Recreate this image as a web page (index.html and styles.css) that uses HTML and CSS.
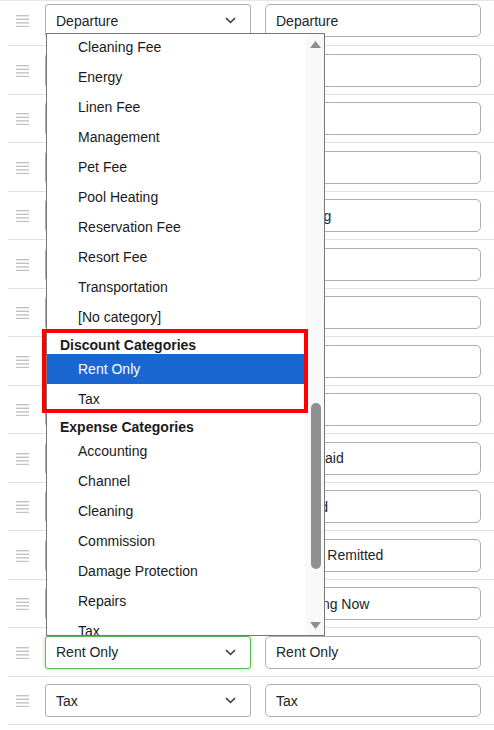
FILE: index.html
```html
<!DOCTYPE html>
<html>
<head>
<meta charset="utf-8">
<link rel="stylesheet" href="styles.css">
</head>
<body>
<div class="topline"></div>
<div class="rows">
  <div class="row">
    <span class="handle"><svg width="13" height="12" viewBox="0 0 13 12"><rect y="0" width="13" height="1.4"/><rect y="3.6" width="13" height="1.4"/><rect y="7.2" width="13" height="1.4"/><rect y="10.8" width="13" height="1.4"/></svg></span>
    <div class="select"><span>Departure</span><svg class="chev" width="11" height="7" viewBox="0 0 11 7"><polyline points="1,1 5.5,5.5 10,1"/></svg></div>
    <div class="input">Departure</div>
  </div>
  <div class="row">
    <span class="handle"><svg width="13" height="12" viewBox="0 0 13 12"><rect y="0" width="13" height="1.4"/><rect y="3.6" width="13" height="1.4"/><rect y="7.2" width="13" height="1.4"/><rect y="10.8" width="13" height="1.4"/></svg></span>
    <div class="select"><span>Arrival</span><svg class="chev" width="11" height="7" viewBox="0 0 11 7"><polyline points="1,1 5.5,5.5 10,1"/></svg></div>
    <div class="input">Arrival</div>
  </div>
  <div class="row">
    <span class="handle"><svg width="13" height="12" viewBox="0 0 13 12"><rect y="0" width="13" height="1.4"/><rect y="3.6" width="13" height="1.4"/><rect y="7.2" width="13" height="1.4"/><rect y="10.8" width="13" height="1.4"/></svg></span>
    <div class="select"><span>Linen Fee</span><svg class="chev" width="11" height="7" viewBox="0 0 11 7"><polyline points="1,1 5.5,5.5 10,1"/></svg></div>
    <div class="input">Linen</div>
  </div>
  <div class="row">
    <span class="handle"><svg width="13" height="12" viewBox="0 0 13 12"><rect y="0" width="13" height="1.4"/><rect y="3.6" width="13" height="1.4"/><rect y="7.2" width="13" height="1.4"/><rect y="10.8" width="13" height="1.4"/></svg></span>
    <div class="select"><span>Pet Fee</span><svg class="chev" width="11" height="7" viewBox="0 0 11 7"><polyline points="1,1 5.5,5.5 10,1"/></svg></div>
    <div class="input">Pets</div>
  </div>
  <div class="row">
    <span class="handle"><svg width="13" height="12" viewBox="0 0 13 12"><rect y="0" width="13" height="1.4"/><rect y="3.6" width="13" height="1.4"/><rect y="7.2" width="13" height="1.4"/><rect y="10.8" width="13" height="1.4"/></svg></span>
    <div class="select"><span>Cleaning Fee</span><svg class="chev" width="11" height="7" viewBox="0 0 11 7"><polyline points="1,1 5.5,5.5 10,1"/></svg></div>
    <div class="input">Cleaning</div>
  </div>
  <div class="row">
    <span class="handle"><svg width="13" height="12" viewBox="0 0 13 12"><rect y="0" width="13" height="1.4"/><rect y="3.6" width="13" height="1.4"/><rect y="7.2" width="13" height="1.4"/><rect y="10.8" width="13" height="1.4"/></svg></span>
    <div class="select"><span>Energy</span><svg class="chev" width="11" height="7" viewBox="0 0 11 7"><polyline points="1,1 5.5,5.5 10,1"/></svg></div>
    <div class="input">Energy</div>
  </div>
  <div class="row">
    <span class="handle"><svg width="13" height="12" viewBox="0 0 13 12"><rect y="0" width="13" height="1.4"/><rect y="3.6" width="13" height="1.4"/><rect y="7.2" width="13" height="1.4"/><rect y="10.8" width="13" height="1.4"/></svg></span>
    <div class="select"><span>Resort Fee</span><svg class="chev" width="11" height="7" viewBox="0 0 11 7"><polyline points="1,1 5.5,5.5 10,1"/></svg></div>
    <div class="input">Resort</div>
  </div>
  <div class="row">
    <span class="handle"><svg width="13" height="12" viewBox="0 0 13 12"><rect y="0" width="13" height="1.4"/><rect y="3.6" width="13" height="1.4"/><rect y="7.2" width="13" height="1.4"/><rect y="10.8" width="13" height="1.4"/></svg></span>
    <div class="select"><span>Management</span><svg class="chev" width="11" height="7" viewBox="0 0 11 7"><polyline points="1,1 5.5,5.5 10,1"/></svg></div>
    <div class="input">Mgmt</div>
  </div>
  <div class="row">
    <span class="handle"><svg width="13" height="12" viewBox="0 0 13 12"><rect y="0" width="13" height="1.4"/><rect y="3.6" width="13" height="1.4"/><rect y="7.2" width="13" height="1.4"/><rect y="10.8" width="13" height="1.4"/></svg></span>
    <div class="select"><span>Pool Heating</span><svg class="chev" width="11" height="7" viewBox="0 0 11 7"><polyline points="1,1 5.5,5.5 10,1"/></svg></div>
    <div class="input">Pool</div>
  </div>
  <div class="row">
    <span class="handle"><svg width="13" height="12" viewBox="0 0 13 12"><rect y="0" width="13" height="1.4"/><rect y="3.6" width="13" height="1.4"/><rect y="7.2" width="13" height="1.4"/><rect y="10.8" width="13" height="1.4"/></svg></span>
    <div class="select"><span>Channel</span><svg class="chev" width="11" height="7" viewBox="0 0 11 7"><polyline points="1,1 5.5,5.5 10,1"/></svg></div>
    <div class="input">Client Paid</div>
  </div>
  <div class="row">
    <span class="handle"><svg width="13" height="12" viewBox="0 0 13 12"><rect y="0" width="13" height="1.4"/><rect y="3.6" width="13" height="1.4"/><rect y="7.2" width="13" height="1.4"/><rect y="10.8" width="13" height="1.4"/></svg></span>
    <div class="select"><span>Commission</span><svg class="chev" width="11" height="7" viewBox="0 0 11 7"><polyline points="1,1 5.5,5.5 10,1"/></svg></div>
    <div class="input">Invoiced</div>
  </div>
  <div class="row">
    <span class="handle"><svg width="13" height="12" viewBox="0 0 13 12"><rect y="0" width="13" height="1.4"/><rect y="3.6" width="13" height="1.4"/><rect y="7.2" width="13" height="1.4"/><rect y="10.8" width="13" height="1.4"/></svg></span>
    <div class="select"><span>Damage Protection</span><svg class="chev" width="11" height="7" viewBox="0 0 11 7"><polyline points="1,1 5.5,5.5 10,1"/></svg></div>
    <div class="input">Deposit Remitted</div>
  </div>
  <div class="row">
    <span class="handle"><svg width="13" height="12" viewBox="0 0 13 12"><rect y="0" width="13" height="1.4"/><rect y="3.6" width="13" height="1.4"/><rect y="7.2" width="13" height="1.4"/><rect y="10.8" width="13" height="1.4"/></svg></span>
    <div class="select"><span>Repairs</span><svg class="chev" width="11" height="7" viewBox="0 0 11 7"><polyline points="1,1 5.5,5.5 10,1"/></svg></div>
    <div class="input">Collecting Now</div>
  </div>
  <div class="row">
    <span class="handle"><svg width="13" height="12" viewBox="0 0 13 12"><rect y="0" width="13" height="1.4"/><rect y="3.6" width="13" height="1.4"/><rect y="7.2" width="13" height="1.4"/><rect y="10.8" width="13" height="1.4"/></svg></span>
    <div class="select focused"><span>Rent Only</span><svg class="chev" width="11" height="7" viewBox="0 0 11 7"><polyline points="1,1 5.5,5.5 10,1"/></svg></div>
    <div class="input">Rent Only</div>
  </div>
  <div class="row">
    <span class="handle"><svg width="13" height="12" viewBox="0 0 13 12"><rect y="0" width="13" height="1.4"/><rect y="3.6" width="13" height="1.4"/><rect y="7.2" width="13" height="1.4"/><rect y="10.8" width="13" height="1.4"/></svg></span>
    <div class="select"><span>Tax</span><svg class="chev" width="11" height="7" viewBox="0 0 11 7"><polyline points="1,1 5.5,5.5 10,1"/></svg></div>
    <div class="input">Tax</div>
  </div>
</div>

<div class="dropdown">
  <div class="list">
    <div class="opt">Cleaning Fee</div>
    <div class="opt">Energy</div>
    <div class="opt">Linen Fee</div>
    <div class="opt">Management</div>
    <div class="opt">Pet Fee</div>
    <div class="opt">Pool Heating</div>
    <div class="opt">Reservation Fee</div>
    <div class="opt">Resort Fee</div>
    <div class="opt">Transportation</div>
    <div class="opt">[No category]</div>
    <div class="group">Discount Categories</div>
    <div class="opt selected">Rent Only</div>
    <div class="opt">Tax</div>
    <div class="group">Expense Categories</div>
    <div class="opt">Accounting</div>
    <div class="opt">Channel</div>
    <div class="opt">Cleaning</div>
    <div class="opt">Commission</div>
    <div class="opt">Damage Protection</div>
    <div class="opt">Repairs</div>
    <div class="opt">Tax</div>
    <div class="opt">Utilities</div>
  </div>
  <div class="scrollbar">
    <svg class="arrow" width="11" height="7" viewBox="0 0 11 7"><polygon points="5.5,0 11,7 0,7"/></svg>
    <div class="thumb" style="margin-top:355px;height:166px"></div>
    <svg class="arrow down" width="11" height="7" viewBox="0 0 11 7"><polygon points="0,0 11,0 5.5,7"/></svg>
  </div>
</div>

<div class="annot"></div>
</body>
</html>
```

FILE: styles.css
```css
html, body {
  margin: 0;
  padding: 0;
  background: #ffffff;
}
body {
  font-family: "Liberation Sans", Arial, sans-serif;
  font-size: 14px;
  color: #212529;
  position: relative;
  width: 494px;
  height: 730px;
  overflow: hidden;
}
.topline {
  height: 1px;
  background: #e6e6e6;
}
.rows {
  margin-left: 8px;
}
.row {
  display: flex;
  align-items: center;
  padding: 7.5px 0 7px 0;
  border-bottom: 1px solid #dee2e6;
}
.row:first-child {
  padding-top: 3px;
  padding-bottom: 8px;
}
.handle {
  width: 37px;
  box-sizing: border-box;
  padding-left: 8px;
  display: flex;
  align-items: center;
  height: 33px;
}
.handle svg {
  fill: #c2c2c2;
  margin-top: 1px;
}
.select {
  width: 206px;
  height: 33px;
  box-sizing: border-box;
  border: 1px solid #a9afb5;
  border-radius: 3px;
  padding: 0 14px 0 10px;
  display: flex;
  align-items: center;
  justify-content: space-between;
  margin-right: 14px;
  background: #fff;
}
.select.focused {
  border-color: #5cb85c;
  box-shadow: 0 0 4px rgba(92, 184, 92, 0.45);
}
.chev polyline {
  fill: none;
  stroke: #333;
  stroke-width: 1.5;
}
.input {
  width: 216px;
  height: 33px;
  box-sizing: border-box;
  border: 1px solid #a9afb5;
  border-radius: 5px;
  padding: 0 10px;
  display: flex;
  align-items: center;
  white-space: nowrap;
  overflow: hidden;
}
.dropdown {
  position: absolute;
  left: 46px;
  top: 33px;
  width: 279px;
  height: 603px;
  box-sizing: border-box;
  border: 1px solid #767676;
  background: #fff;
  display: flex;
  z-index: 5;
  overflow: hidden;
}
.list {
  flex: 1;
  margin-top: -2px;
  color: #1a1a1a;
}
.opt {
  height: 30px;
  line-height: 30px;
  padding-left: 31px;
  white-space: nowrap;
}
.opt.selected {
  background: #1a67d2;
  color: #fff;
}
.group {
  height: 22px;
  box-sizing: border-box;
  padding: 4px 0 0 13px;
  line-height: 18px;
  font-weight: bold;
  white-space: nowrap;
}
.scrollbar {
  width: 19px;
  background: #f9f9f9;
  display: flex;
  flex-direction: column;
  align-items: center;
  padding: 7px 0 6px 0;
  box-sizing: border-box;
}
.arrow {
  fill: #8f8f8f;
  flex: none;
  margin-left: 1px;
}
.arrow.down {
  margin-top: auto;
}
.thumb {
  width: 10px;
  background: #8f8f8f;
  border-radius: 5px;
  margin-left: 2px;
  flex: none;
}
.annot {
  position: absolute;
  left: 42px;
  top: 329px;
  width: 266px;
  height: 84px;
  box-sizing: border-box;
  border: 4.5px solid #ff0000;
  z-index: 6;
}
```
